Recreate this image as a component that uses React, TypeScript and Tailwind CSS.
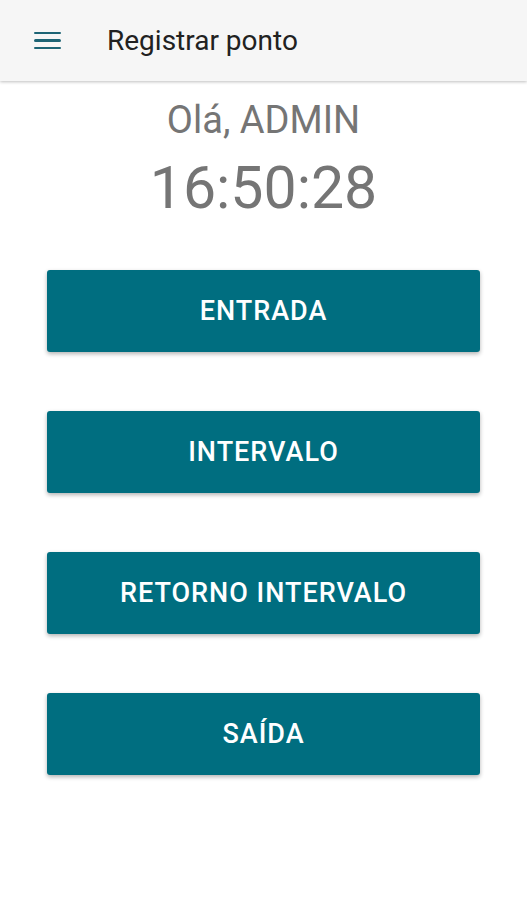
const buttons = ['ENTRADA', 'INTERVALO', 'RETORNO INTERVALO', 'SAÍDA'];

export default function App() {
  return (
    <div className="min-h-[900px] bg-white" style={{ fontFamily: 'Roboto, sans-serif' }}>
      <header className="flex h-[81px] items-center bg-[#f6f6f6] shadow-[0_1px_3px_rgba(0,0,0,0.25)]">
        <div className="ml-[34px] flex w-[27px] flex-col gap-[5px]">
          <span className="h-[2.5px] rounded-sm bg-[#1d6475]" />
          <span className="h-[2.5px] rounded-sm bg-[#1d6475]" />
          <span className="h-[2.5px] rounded-sm bg-[#1d6475]" />
        </div>
        <h1 className="ml-[46px] text-[28px] text-[#212121]">Registrar ponto</h1>
      </header>

      <div className="flex flex-col items-center">
        <p className="mt-[17px] text-[38px] leading-[44px] text-[#757575]">Olá, ADMIN</p>
        <p className="mt-[14px] text-[59px] leading-[64px] text-[#757575]">16:50:28</p>
      </div>

      <div className="mt-[50px] flex flex-col gap-[59px] px-[47px]">
        {buttons.map((label) => (
          <button
            key={label}
            className="h-[82px] w-full rounded-[3px] bg-[#006e80] text-[27px] font-medium tracking-[1px] text-white shadow-[0_2px_4px_rgba(0,0,0,0.3)]"
          >
            {label}
          </button>
        ))}
      </div>
    </div>
  );
}
